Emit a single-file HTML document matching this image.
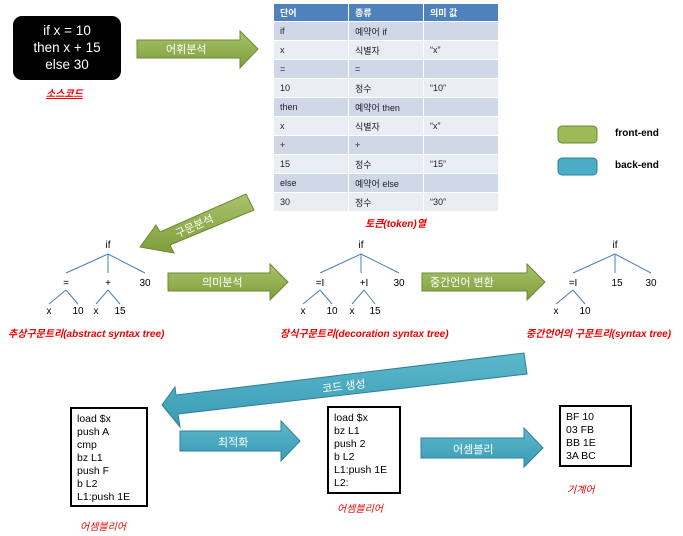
<!DOCTYPE html>
<html><head><meta charset="utf-8"><style>
body{margin:0;width:683px;height:536px;background:#fff;position:relative;overflow:hidden;font-family:"Liberation Sans","Noto Sans CJK KR",sans-serif;}
.a{position:absolute;white-space:nowrap}
.red{color:#e00;font-style:italic;font-weight:bold;font-size:10px}
table{position:absolute;left:273px;top:3px;border-collapse:collapse;font-size:9px;color:#222}
td{width:75px;height:19px;padding:0 0 0 6px;border:1px solid #fff;box-sizing:border-box}
tr.h td{background:#4f81bd;color:#fff;font-weight:bold;height:18px}
tr:nth-child(even) td{background:#d0d8e8}
tr:nth-child(odd):not(.h) td{background:#e9edf4}
.box{position:absolute;border:2px solid #000;background:#fff;font-size:10.5px;line-height:13px;padding:4px 5px;box-sizing:border-box}
.t{font-size:10px;position:absolute;transform:translateX(-50%)}
</style></head><body>
<div class="a" style="left:13px;top:16px;width:108px;height:64px;background:#000;border-radius:9px;color:#fff;font-size:13.5px;line-height:17px;text-align:center;padding-top:6px;box-sizing:border-box">if x = 10<br>then x + 15<br>else 30</div>
<div class="a red" style="left:46px;top:85px;text-decoration:underline">소스코드</div>

<svg class="a" style="left:0;top:0" width="683" height="536">
<defs><linearGradient id="g" x1="0" y1="0" x2="0" y2="1"><stop offset="0" stop-color="#a8c36a"/><stop offset="1" stop-color="#7f9e3c"/></linearGradient>
<linearGradient id="b" x1="0" y1="0" x2="0" y2="1"><stop offset="0" stop-color="#5cb8cc"/><stop offset="1" stop-color="#3a9bb3"/></linearGradient></defs>
<polygon points="137,40 240,40 240,31 258,49 240,68 240,58 137,58" fill="url(#g)" stroke="#6b8a35"/>
<polygon points="168,273 270,273 270,264 288,282 270,300 270,291 168,291" fill="url(#g)" stroke="#6b8a35"/>
<polygon points="422,273 527,273 527,264 545,282 527,300 527,291 422,291" fill="url(#g)" stroke="#6b8a35"/>
<polygon points="246,194 254,210 170,245 174,253 140,247 156,225 160,232" fill="url(#g)" stroke="#6b8a35"/>
<polygon points="524,353 527,374 178,414 180,427 162,405 175,387 176,395" fill="url(#b)" stroke="#2d8199"/>
<polygon points="180,431 281,431 281,421 300,441 281,461 281,451 180,451" fill="url(#b)" stroke="#2d8199"/>
<polygon points="421,438 524,438 524,428 543,448 524,467 524,458 421,458" fill="url(#b)" stroke="#2d8199"/>
<rect x="558" y="126" width="39" height="17" rx="4" fill="#9bbb59" stroke="#6b8a35"/>
<rect x="558" y="158" width="39" height="17" rx="4" fill="#4bacc6" stroke="#2d8199"/>
<g stroke="#4a7ebb" stroke-width="1" fill="none">
<path d="M108,254L66,273M108,254V273M108,254L145,273M66,290L49,304M66,290L78,304M108,290L96,304M108,290L120,304"/>
<path d="M361,254L320,273M361,254V273M361,254L399,273M320,290L303,304M320,290L332,304M364,290L352,304M364,290L375,304"/>
<path d="M615,254L573,273M615,254V273M615,254L651,273M573,290L556,304M573,290L585,304"/>
</g>
</svg>
<div class="a" style="left:166px;top:41px;color:#fff;font-size:11px">어휘분석</div>
<div class="a" style="left:202px;top:274px;color:#fff;font-size:11px">의미분석</div>
<div class="a" style="left:430px;top:274px;color:#fff;font-size:11px">중간언어 변환</div>
<div class="a" style="left:174px;top:218px;color:#fff;font-size:11px;transform:rotate(-24deg)">구문분석</div>
<div class="a" style="left:322px;top:378px;color:#fff;font-size:11px;transform:rotate(-7deg)">코드 생성</div>
<div class="a" style="left:218px;top:434px;color:#fff;font-size:11px">최적화</div>
<div class="a" style="left:453px;top:441px;color:#fff;font-size:11px">어셈블리</div>
<div class="a" style="left:615px;top:128px;font-size:10px;font-weight:bold">front-end</div>
<div class="a" style="left:615px;top:160px;font-size:10px;font-weight:bold">back-end</div>

<table>
<tr class="h"><td>단어</td><td>종류</td><td>의미 값</td></tr>
<tr><td>if</td><td>예약어 if</td><td></td></tr>
<tr><td>x</td><td>식별자</td><td>“x”</td></tr>
<tr><td>=</td><td>=</td><td></td></tr>
<tr><td>10</td><td>정수</td><td>“10”</td></tr>
<tr><td>then</td><td>예약어 then</td><td></td></tr>
<tr><td>x</td><td>식별자</td><td>“x”</td></tr>
<tr><td>+</td><td>+</td><td></td></tr>
<tr><td>15</td><td>정수</td><td>“15”</td></tr>
<tr><td>else</td><td>예약어 else</td><td></td></tr>
<tr><td>30</td><td>정수</td><td>“30”</td></tr>
</table>
<div class="a red" style="left:365px;top:215px">토큰(token)열</div>

<div class="t" style="left:108px;top:240px">if</div>
<div class="t" style="left:66px;top:278px">=</div><div class="t" style="left:108px;top:278px">+</div><div class="t" style="left:145px;top:278px">30</div>
<div class="t" style="left:49px;top:306px">x</div><div class="t" style="left:78px;top:306px">10</div><div class="t" style="left:96px;top:306px">x</div><div class="t" style="left:120px;top:306px">15</div>
<div class="a red" style="left:8px;top:325px">추상구문트리(abstract syntax tree)</div>

<div class="t" style="left:361px;top:240px">if</div>
<div class="t" style="left:320px;top:278px">=I</div><div class="t" style="left:364px;top:278px">+I</div><div class="t" style="left:399px;top:278px">30</div>
<div class="t" style="left:303px;top:306px">x</div><div class="t" style="left:332px;top:306px">10</div><div class="t" style="left:352px;top:306px">x</div><div class="t" style="left:375px;top:306px">15</div>
<div class="a red" style="left:280px;top:325px">장식구문트리(decoration syntax tree)</div>

<div class="t" style="left:615px;top:240px">if</div>
<div class="t" style="left:573px;top:278px">=I</div><div class="t" style="left:617px;top:278px">15</div><div class="t" style="left:651px;top:278px">30</div>
<div class="t" style="left:556px;top:306px">x</div><div class="t" style="left:585px;top:306px">10</div>
<div class="a red" style="left:526px;top:325px">중간언어의 구문트리(syntax tree)</div>

<div class="box" style="left:70px;top:407px;width:78px;height:100px">load $x<br>push A<br>cmp<br>bz L1<br>push F<br>b L2<br>L1:push 1E</div>
<div class="box" style="left:327px;top:406px;width:74px;height:88px">load $x<br>bz L1<br>push 2<br>b L2<br>L1:push 1E<br>L2:</div>
<div class="box" style="left:559px;top:405px;width:73px;height:62px">BF 10<br>03 FB<br>BB 1E<br>3A BC</div>
<div class="a red" style="left:80px;top:518px;font-weight:normal">어셈블리어</div>
<div class="a red" style="left:337px;top:500px;font-weight:normal">어셈블리어</div>
<div class="a red" style="left:567px;top:481px;font-weight:normal">기계어</div>
</body></html>
